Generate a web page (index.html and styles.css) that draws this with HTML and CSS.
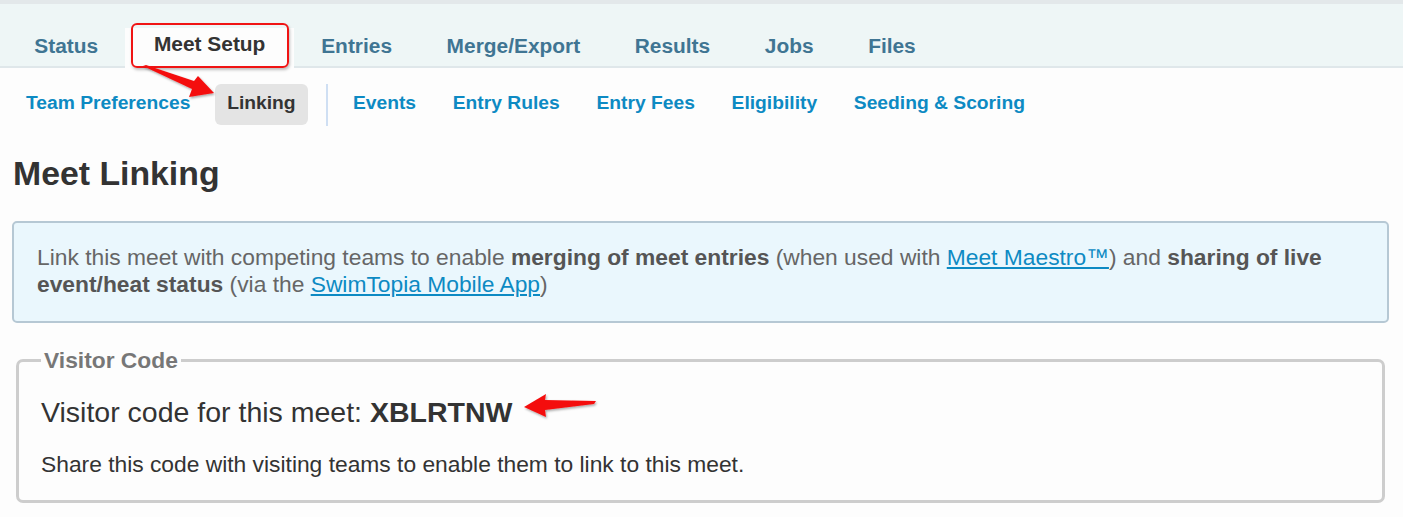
FILE: index.html
```html
<!DOCTYPE html>
<html lang="en">
<head>
<meta charset="utf-8">
<title>Meet Linking</title>
<link rel="stylesheet" href="styles.css">
</head>
<body>
<div class="page">
  <div class="topstrip"></div>
  <nav class="tabs">
    <a class="tab">Status</a>
    <a class="tab tab-active">Meet Setup</a>
    <a class="tab">Entries</a>
    <a class="tab">Merge/Export</a>
    <a class="tab">Results</a>
    <a class="tab">Jobs</a>
    <a class="tab">Files</a>
  </nav>
  <nav class="subnav">
    <a class="sub">Team Preferences</a>
    <a class="sub sub-active">Linking</a>
    <span class="sep"></span>
    <a class="sub">Events</a>
    <a class="sub">Entry Rules</a>
    <a class="sub">Entry Fees</a>
    <a class="sub">Eligibility</a>
    <a class="sub">Seeding &amp; Scoring</a>
  </nav>
  <main class="main">
    <h1 class="title">Meet Linking</h1>
    <div class="info">
      Link this meet with competing teams to enable <b>merging of meet entries</b> (when used with <a class="lnk">Meet Maestro™</a>) and <b>sharing of live event/heat status</b> (via the <a class="lnk">SwimTopia Mobile App</a>)
    </div>
    <fieldset class="box">
      <legend class="legend">Visitor Code</legend>
      <p class="code">Visitor code for this meet: <b>XBLRTNW</b></p>
      <p class="share">Share this code with visiting teams to enable them to link to this meet.</p>
    </fieldset>
  </main>
  <svg class="anno" width="1403" height="517" viewBox="0 0 1403 517">
    <defs>
      <filter id="sh" x="-20%" y="-20%" width="140%" height="140%">
        <feDropShadow dx="1" dy="1.5" stdDeviation="1.2" flood-color="#000" flood-opacity="0.35"/>
      </filter>
    </defs>
    <path filter="url(#sh)" fill="#f40f0f" d="M143 66 L146 65 L194 81 L198 76 L214 93 L189 97 L192 89 Z"/>
    <path filter="url(#sh)" fill="#f40f0f" d="M524 407 L546 394 L545 400 L596 401 L594 404 L545 410 L546 417 Z"/>
  </svg>
</div>
</body>
</html>
```

FILE: styles.css
```css
* { box-sizing: border-box; }
html, body { margin: 0; padding: 0; }
body {
  font-family: "Liberation Sans", Arial, sans-serif;
  background: #fdfdfd;
  color: #333;
}
.page { position: relative; width: 1403px; height: 517px; overflow: hidden; }
.topstrip { height: 4px; background: #e3e8ea; }
.tabs {
  display: flex;
  align-items: flex-end;
  height: 64px;
  padding-left: 7px;
  background: #eef6f6;
  border-bottom: 2px solid #dfe7ea;
}
.tab {
  position: relative;
  display: block;
  height: 38px;
  line-height: 31px;
  padding: 0 27.3px;
  margin-bottom: -2px;
  font-size: 20.9px;
  font-weight: bold;
  color: #3f7593;
}
.tab-active {
  background: #fdfdfd;
  color: #333;
  height: 40px;
  padding: 0 28.5px;
}
.tab-active::after {
  content: "";
  position: absolute;
  left: 6px;
  right: 5px;
  top: -5px;
  bottom: 0px;
  border: 2px solid #f01414;
  border-radius: 6px;
  box-shadow: 1px 2px 3px rgba(0,0,0,0.25);
}
.subnav {
  display: flex;
  align-items: center;
  gap: 12.7px;
  padding: 16px 0 0 14px;
  height: 57px;
}
.sub {
  display: block;
  height: 41px;
  line-height: 38px;
  padding: 0 12px;
  border-radius: 6px;
  font-size: 19.25px;
  font-weight: bold;
  color: #0d8ac3;
}
.sub-active { background: #e4e4e4; color: #333; }
.sep {
  width: 2px;
  height: 42px;
  background: #cfdff3;
  margin: 0 0 0 6px;
}
.main { padding: 0 14px 0 12px; }
.title {
  margin: 29px 0 0 1px;
  font-size: 33.8px;
  line-height: 39px;
  font-weight: bold;
  color: #333;
}
.info {
  margin-top: 28px;
  height: 102px;
  padding: 21px 20px 0 23px;
  background: #eaf7fd;
  border: 2px solid #b6c8d4;
  border-radius: 5px;
  font-size: 22.8px;
  line-height: 27px;
  color: #666;
}
.info b { color: #555; }
.lnk { color: #0d8ac3; text-decoration: underline; }
.box {
  margin: 25px 4px 0 4px;
  padding: 0 22px 0 22px;
  border: 3px solid #cdcdcd;
  border-radius: 7px;
  height: 155px;
}
.legend {
  padding: 0 3px;
  font-size: 22.8px;
  line-height: 24px;
  font-weight: bold;
  color: #777;
}
.code {
  margin: 23px 0 0 0;
  font-size: 28.5px;
  line-height: 34px;
  color: #333;
}
.share {
  margin: 22px 0 0 0;
  font-size: 22.8px;
  line-height: 27px;
  color: #333;
}
.anno { position: absolute; left: 0; top: 0; pointer-events: none; }
```
